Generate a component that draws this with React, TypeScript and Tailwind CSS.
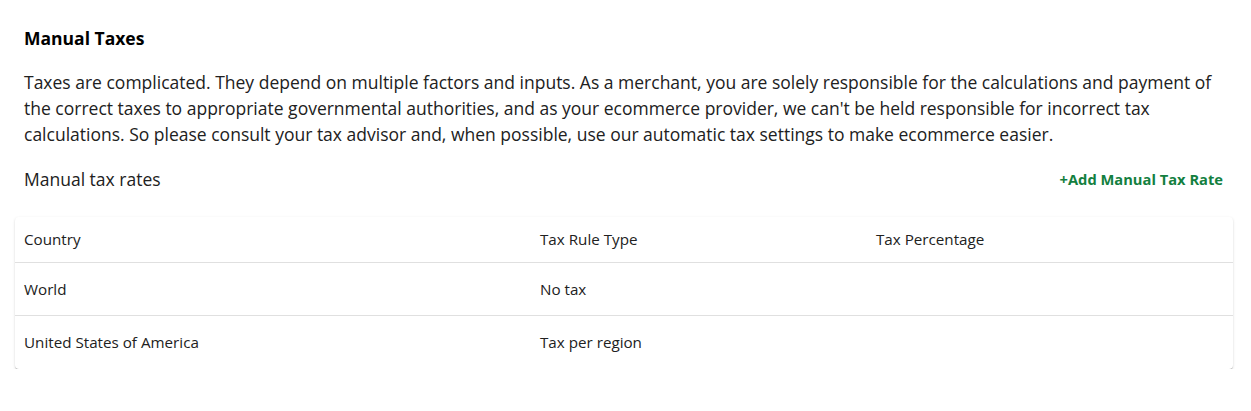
import React from "react";

const rows = [
  { country: "World", type: "No tax", pct: "" },
  { country: "United States of America", type: "Tax per region", pct: "" },
];

export default function App() {
  return (
    <div
      className="bg-white text-[#212121] pl-[15px] pr-[18px] pt-[26px]"
      style={{ fontFamily: '"Open Sans", sans-serif' }}
    >
      <div className="px-[9px]">
        <h2 className="text-[17.5px] font-bold leading-[24px] text-black">Manual Taxes</h2>
        <p className="mt-[19px] text-[17.5px] leading-[26px]">
          Taxes are complicated. They depend on multiple factors and inputs. As a merchant, you are solely responsible for the calculations and payment of the correct taxes to appropriate governmental authorities, and as your ecommerce provider, we can't be held responsible for incorrect tax calculations. So please consult your tax advisor and, when possible, use our automatic tax settings to make ecommerce easier.
        </p>
        <div className="mt-[20px] flex items-center justify-between pr-px">
          <span className="text-[17.5px] leading-[24px]">Manual tax rates</span>
          <button className="text-[14.7px] font-bold leading-[20px] text-[#137f3f]">+Add Manual Tax Rate</button>
        </div>
      </div>
      <div className="mt-[26px] rounded-[4px] bg-white shadow-[0_2px_1px_-1px_rgba(0,0,0,0.2),0_1px_1px_0_rgba(0,0,0,0.14),0_1px_3px_0_rgba(0,0,0,0.12)] text-[15.2px]">
        <div className="grid grid-cols-[516px_336px_1fr] h-[46px] items-center border-b border-[#e0e0e0]">
          <div className="px-[9px]">Country</div>
          <div className="px-[9px]">Tax Rule Type</div>
          <div className="px-[9px]">Tax Percentage</div>
        </div>
        {rows.map((r, i) => (
          <div
            key={r.country}
            className={
              i < rows.length - 1
                ? "grid grid-cols-[516px_336px_1fr] h-[53px] items-center border-b border-[#e0e0e0]"
                : "grid grid-cols-[516px_336px_1fr] h-[53px] items-center"
            }
          >
            <div className="px-[9px]">{r.country}</div>
            <div className="px-[9px]">{r.type}</div>
            <div className="px-[9px]">{r.pct}</div>
          </div>
        ))}
      </div>
    </div>
  );
}
